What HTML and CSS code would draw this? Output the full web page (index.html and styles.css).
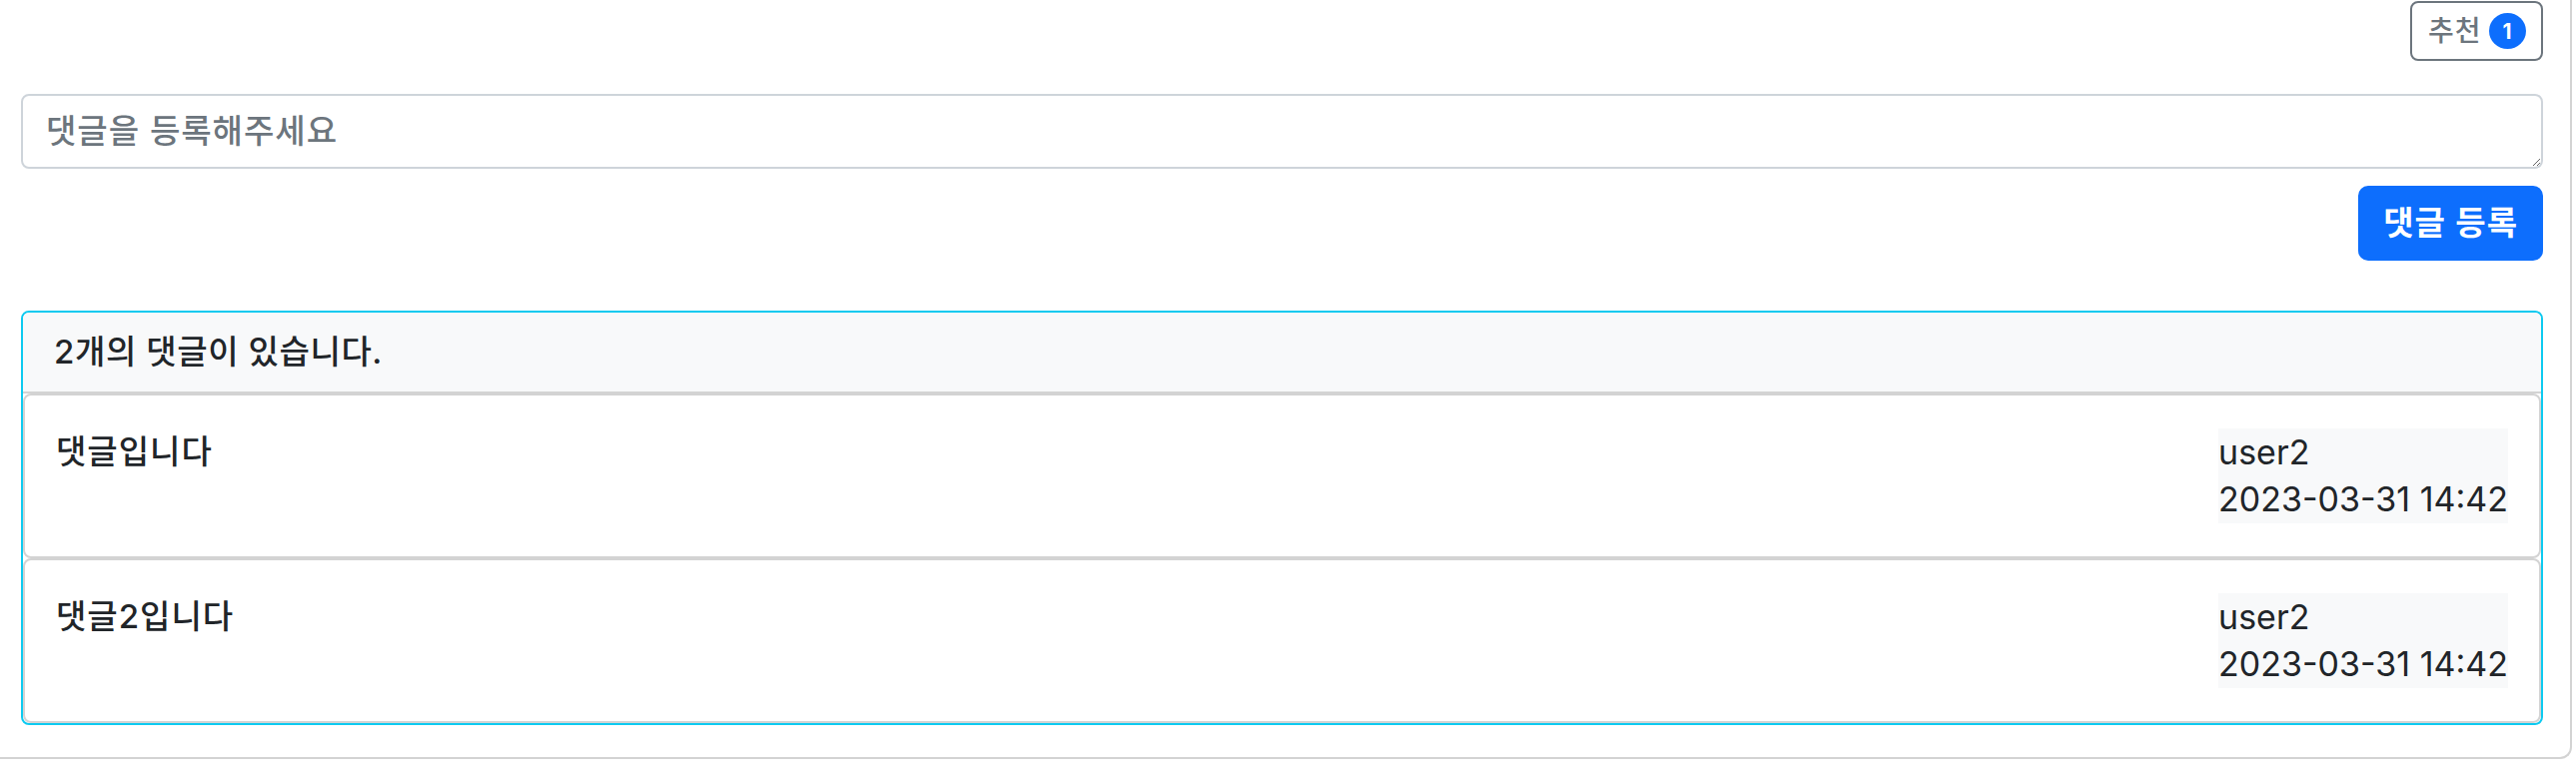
FILE: index.html
```html
<!DOCTYPE html>
<html lang="ko">
<head>
<meta charset="utf-8">
<title>댓글</title>
<link rel="stylesheet" href="styles.css">
</head>
<body>
<div class="page">
  <div class="rec-row">
    <button class="btn-rec" type="button"><span class="rec-label">추천</span><span class="badge">1</span></button>
  </div>
  <textarea class="comment-input" rows="1" placeholder="댓글을 등록해주세요"></textarea>
  <div class="submit-row">
    <button class="btn-submit" type="button">댓글 등록</button>
  </div>
  <div class="card">
    <div class="card-header">2개의 댓글이 있습니다.</div>
    <div class="comment">
      <div class="comment-text">댓글입니다</div>
      <div class="meta"><div>user2</div><div>2023-03-31 14:42</div></div>
    </div>
    <div class="comment">
      <div class="comment-text">댓글2입니다</div>
      <div class="meta"><div>user2</div><div>2023-03-31 14:42</div></div>
    </div>
  </div>
</div>
</body>
</html>
```
FILE: styles.css
```css
html, body {
  margin: 0;
  padding: 0;
  background: #ffffff;
}
body {
  font-family: Inter, "Noto Sans CJK KR", sans-serif;
  font-size: 33px;
  font-weight: 500;
  letter-spacing: 1px;
  line-height: 46.5px;
  color: #212529;
}
.page {
  margin-right: 4px;
  border-right: 2px solid #d3d3d3;
  border-bottom: 2px solid #d3d3d3;
  border-bottom-right-radius: 12px;
  padding: 1px 27px 32px 21px;
  display: flex;
  flex-direction: column;
}
.rec-row {
  display: flex;
  justify-content: flex-end;
}
.btn-rec {
  display: inline-flex;
  align-items: center;
  gap: 7px;
  font-family: Inter, "Noto Sans CJK KR", sans-serif;
  font-size: 28px;
  font-weight: 500;
  letter-spacing: 1px;
  line-height: 40.5px;
  padding: 7.75px 15.5px;
  border: 2px solid #6c757d;
  border-radius: 8px;
  background: transparent;
  color: #6c757d;
}
.badge {
  display: inline-flex;
  align-items: center;
  justify-content: center;
  width: 37px;
  height: 36px;
  border-radius: 50%;
  background: #0d6efd;
  color: #ffffff;
  font-size: 21px;
  font-weight: 700;
  letter-spacing: 0;
  line-height: 1;
}
.comment-input {
  margin-top: 33px;
  box-sizing: border-box;
  width: 100%;
  height: 75px;
  padding: 12.25px 23px;
  border: 2px solid #ced4da;
  border-radius: 8px;
  font-family: Inter, "Noto Sans CJK KR", sans-serif;
  font-size: 33px;
  font-weight: 500;
  letter-spacing: 1px;
  line-height: 46.5px;
  color: #212529;
  resize: vertical;
  display: block;
}
.comment-input::placeholder {
  color: #6c757d;
}
.submit-row {
  margin-top: 17px;
  display: flex;
  justify-content: flex-end;
}
.btn-submit {
  font-family: Inter, "Noto Sans CJK KR", sans-serif;
  font-size: 33px;
  font-weight: 600;
  letter-spacing: 1px;
  line-height: 46.5px;
  padding: 12.25px 23px;
  border: 2px solid #0d6efd;
  border-radius: 10px;
  background: #0d6efd;
  color: #ffffff;
}
.card {
  margin-top: 50px;
  border: 2px solid #0dcaf0;
  border-radius: 8px;
  overflow: hidden;
}
.card-header {
  background: #f8f9fa;
  padding: 16px 31px;
  line-height: 46.5px;
  letter-spacing: 0.6px;
  border-bottom: 2px solid #d3d3d3;
}
.comment {
  display: flex;
  justify-content: space-between;
  align-items: flex-start;
  padding: 33px 31px;
  border: 2px solid #d3d3d3;
  border-radius: 8px;
  background: #ffffff;
  line-height: 47.5px;
}
.meta {
  background: #f8f9fa;
  font-size: 34px;
  font-weight: 400;
  letter-spacing: 0;
}
```
